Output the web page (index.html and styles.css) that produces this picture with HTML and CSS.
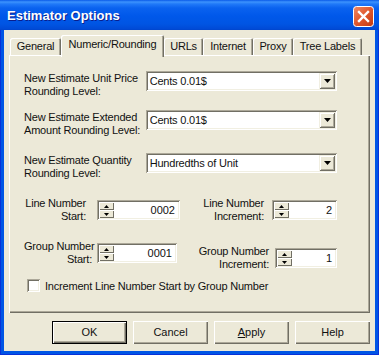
FILE: index.html
```html
<!DOCTYPE html>
<html lang="en">
<head>
    <meta charset="UTF-8">
    <title>Estimator Options</title>
    <link rel="stylesheet" href="styles.css">
</head>
<body>
    <div class="window">
        <div class="titlebar">
            <span class="title">Estimator Options</span>
            <span class="close">
                <svg width="21" height="21" viewBox="0 0 21 21">
                    <defs>
                        <linearGradient id="closeFill" x1="0" y1="0" x2="1" y2="1">
                            <stop offset="0" stop-color="#f08a66"/>
                            <stop offset="0.5" stop-color="#e0572c"/>
                            <stop offset="1" stop-color="#c2390f"/>
                        </linearGradient>
                    </defs>
                    <rect x="0.5" y="0.5" width="20" height="20" rx="3" fill="url(#closeFill)" stroke="#fff"/>
                    <path d="M6 6 L15 15 M15 6 L6 15" stroke="#fff" stroke-width="2.4" stroke-linecap="square"/>
                </svg>
            </span>
        </div>

        <div class="client">
            <div class="tabs">
                <div class="tab w-general">General</div>
                <div class="tab active w-numeric">Numeric/Rounding</div>
                <div class="tab w-urls">URLs</div>
                <div class="tab w-internet">Internet</div>
                <div class="tab w-proxy">Proxy</div>
                <div class="tab w-tree">Tree Labels</div>
            </div>

            <div class="panel">
                <div class="combo-row">
                    <div class="combo-label">New Estimate Unit Price<br>Rounding Level:</div>
                    <div class="combo">
                        <span class="combo-text">Cents 0.01$</span>
                        <span class="drop"><svg width="7" height="4"><polygon points="0,0 7,0 3.5,4" fill="#000"/></svg></span>
                    </div>
                </div>
                <div class="combo-row second">
                    <div class="combo-label">New Estimate Extended<br>Amount Rounding Level:</div>
                    <div class="combo">
                        <span class="combo-text">Cents 0.01$</span>
                        <span class="drop"><svg width="7" height="4"><polygon points="0,0 7,0 3.5,4" fill="#000"/></svg></span>
                    </div>
                </div>
                <div class="combo-row third">
                    <div class="combo-label">New Estimate Quantity<br>Rounding Level:</div>
                    <div class="combo">
                        <span class="combo-text">Hundredths of Unit</span>
                        <span class="drop"><svg width="7" height="4"><polygon points="0,0 7,0 3.5,4" fill="#000"/></svg></span>
                    </div>
                </div>

                <div class="spin-row first">
                    <div class="spin-group">
                        <div class="spin-label l-line">Line Number<br>Start:</div>
                        <div class="spinner s-line">
                            <div class="spin-btns">
                                <span class="spin-btn"><svg width="5" height="3"><polygon points="2.5,0 5,3 0,3" fill="#000"/></svg></span>
                                <span class="spin-btn"><svg width="5" height="3"><polygon points="0,0 5,0 2.5,3" fill="#000"/></svg></span>
                            </div>
                            <div class="spin-field">0002</div>
                        </div>
                    </div>
                    <div class="spin-group">
                        <div class="spin-label l-line-inc">Line Number<br>Increment:</div>
                        <div class="spinner s-line-inc">
                            <div class="spin-btns">
                                <span class="spin-btn"><svg width="5" height="3"><polygon points="2.5,0 5,3 0,3" fill="#000"/></svg></span>
                                <span class="spin-btn"><svg width="5" height="3"><polygon points="0,0 5,0 2.5,3" fill="#000"/></svg></span>
                            </div>
                            <div class="spin-field">2</div>
                        </div>
                    </div>
                </div>

                <div class="spin-row">
                    <div class="spin-group">
                        <div class="spin-label l-group">Group Number<br>Start:</div>
                        <div class="spinner s-group">
                            <div class="spin-btns">
                                <span class="spin-btn"><svg width="5" height="3"><polygon points="2.5,0 5,3 0,3" fill="#000"/></svg></span>
                                <span class="spin-btn"><svg width="5" height="3"><polygon points="0,0 5,0 2.5,3" fill="#000"/></svg></span>
                            </div>
                            <div class="spin-field">0001</div>
                        </div>
                    </div>
                    <div class="spin-group lower">
                        <div class="spin-label l-group-inc">Group Number<br>Increment:</div>
                        <div class="spinner s-group-inc">
                            <div class="spin-btns">
                                <span class="spin-btn"><svg width="5" height="3"><polygon points="2.5,0 5,3 0,3" fill="#000"/></svg></span>
                                <span class="spin-btn"><svg width="5" height="3"><polygon points="0,0 5,0 2.5,3" fill="#000"/></svg></span>
                            </div>
                            <div class="spin-field">1</div>
                        </div>
                    </div>
                </div>

                <div class="check">
                    <span class="check-box"></span>
                    <span>Increment Line Number Start by Group Number</span>
                </div>
            </div>

            <div class="buttons">
                <div class="btn default">OK</div>
                <div class="btn">Cancel</div>
                <div class="btn"><u>A</u>pply</div>
                <div class="btn">Help</div>
            </div>
        </div>
    </div>
</body>
</html>
```

FILE: styles.css
```css
body {
    margin: 0;
    width: 379px;
    height: 355px;
    overflow: hidden;
    font-family: 'Liberation Sans', Arial, sans-serif;
    font-size: 11px;
    letter-spacing: -0.2px;
    color: #111;
}

.window {
    width: 379px;
    height: 355px;
    box-sizing: border-box;
    background: #0055e5;
    box-shadow: inset 1px 0 #0831d9, inset -1px 0 #0831d9, inset 0 -1px #0831d9;
    display: flex;
    flex-direction: column;
}

/* title bar */
.titlebar {
    height: 30px;
    flex: none;
    display: flex;
    align-items: center;
    justify-content: space-between;
    padding: 0 5px 0 7px;
    background: linear-gradient(to bottom, #0a5ae8 0px, #3d93fd 2px, #2079f8 4px, #0a62ef 8px, #0058ea 16px, #0055e3 24px, #004ad6 29px, #0044ca 30px);
}

.title {
    color: #fff;
    font-weight: bold;
    font-size: 13px;
    letter-spacing: 0;
    text-shadow: 1px 1px #0a1e8c;
    margin-top: 1px;
}

.close {
    width: 21px;
    height: 21px;
    margin-top: 2px;
}

.close svg {
    display: block;
}

/* client area */
.client {
    flex: 1;
    margin: 0 4px 4px 4px;
    background: #ece9d8;
    display: flex;
    flex-direction: column;
}

.tabs {
    display: flex;
    height: 21px;
    margin-top: 5px;
    padding-left: 6px;
    margin-bottom: -1px;
}

.tab {
    box-sizing: border-box;
    height: 18px;
    margin-top: 3px;
    text-align: center;
    line-height: 17px;
    border-radius: 2px 2px 0 0;
    box-shadow: inset 1px 1px #fff, inset -1px 0 #716f64, inset -2px 0 #aca899;
}

.tab.active {
    height: 22px;
    margin-top: 0;
    line-height: 19px;
    background: #ece9d8;
    position: relative;
    z-index: 1;
}

.w-general { width: 51px; }
.w-numeric { width: 103px; }
.w-urls { width: 39px; }
.w-internet { width: 50px; }
.w-proxy { width: 40px; }
.w-tree { width: 69px; }

.panel {
    height: 258px;
    box-sizing: border-box;
    margin: 0 5px;
    padding: 16px 33px 0 15px;
    box-shadow: inset 1px 1px #fff, inset -1px -1px #716f64, inset -2px -2px #aca899;
}

/* combo rows */
.combo-row {
    display: flex;
    align-items: flex-start;
}

.combo-row.second {
    margin-top: 12px;
}

.combo-row.third {
    margin-top: 16px;
}

.combo-label {
    width: 124px;
    line-height: 13px;
    padding-top: 1px;
}

.combo {
    width: 195px;
    height: 20px;
    box-sizing: border-box;
    padding: 2px;
    display: flex;
    background: #fff;
    box-shadow: inset 1px 1px #aca899, inset -1px -1px #fff, inset 2px 2px #716f64, inset -2px -2px #f1efe2;
}

.combo-text {
    flex: 1;
    line-height: 16px;
    padding-left: 2px;
}

.drop {
    width: 16px;
    height: 16px;
    display: flex;
    align-items: center;
    justify-content: center;
    background: #ece9d8;
    box-shadow: inset 1px 1px #f1efe2, inset -1px -1px #716f64, inset 2px 2px #fff, inset -2px -2px #aca899;
}

/* spinners */
.spin-row {
    display: flex;
    justify-content: space-between;
    align-items: flex-start;
    margin-top: 17px;
}

.spin-group {
    display: flex;
    align-items: center;
}

.spin-group.lower {
    margin-top: 5px;
}

.spin-label {
    text-align: right;
    line-height: 13px;
    white-space: nowrap;
}

.l-line { width: 62px; margin-right: 11px; }
.l-group { width: 68px; margin-right: 5px; }
.l-line-inc { margin-right: 8px; }
.l-group-inc { margin-right: 6px; }

.spinner {
    height: 20px;
    box-sizing: border-box;
    padding: 2px;
    display: flex;
    background: #fff;
    box-shadow: inset 1px 1px #aca899, inset -1px -1px #fff, inset 2px 2px #716f64, inset -2px -2px #f1efe2;
}

.s-line { width: 83px; }
.s-group { width: 80px; }
.s-line-inc { width: 65px; }
.s-group-inc { width: 62px; }

.spin-btns {
    width: 15px;
    display: flex;
    flex-direction: column;
}

.spin-btn {
    height: 8px;
    display: flex;
    align-items: center;
    justify-content: center;
    background: #ece9d8;
    box-shadow: inset 1px 1px #fff, inset -1px -1px #716f64;
}

.spin-btn svg {
    display: block;
}

.spin-field {
    flex: 1;
    text-align: right;
    line-height: 16px;
    padding-right: 3px;
    font-size: 11px;
    letter-spacing: 0;
}

/* checkbox */
.check {
    display: flex;
    align-items: center;
    margin-top: 8px;
    margin-left: 3px;
}

.check-box {
    width: 13px;
    height: 13px;
    margin-right: 5px;
    background: #fff;
    box-shadow: inset 1px 1px #aca899, inset -1px -1px #fff, inset 2px 2px #716f64, inset -2px -2px #f1efe2;
}

/* dialog buttons */
.buttons {
    display: flex;
    justify-content: flex-end;
    gap: 6px;
    margin-top: 8px;
    padding-right: 5px;
}

.btn {
    width: 75px;
    height: 23px;
    box-sizing: border-box;
    text-align: center;
    line-height: 22px;
    letter-spacing: 0;
    box-shadow: inset 1px 1px #fff, inset -1px -1px #716f64, inset -2px -2px #aca899;
}

.btn.default {
    border: 1px solid #000;
    line-height: 20px;
}
```
